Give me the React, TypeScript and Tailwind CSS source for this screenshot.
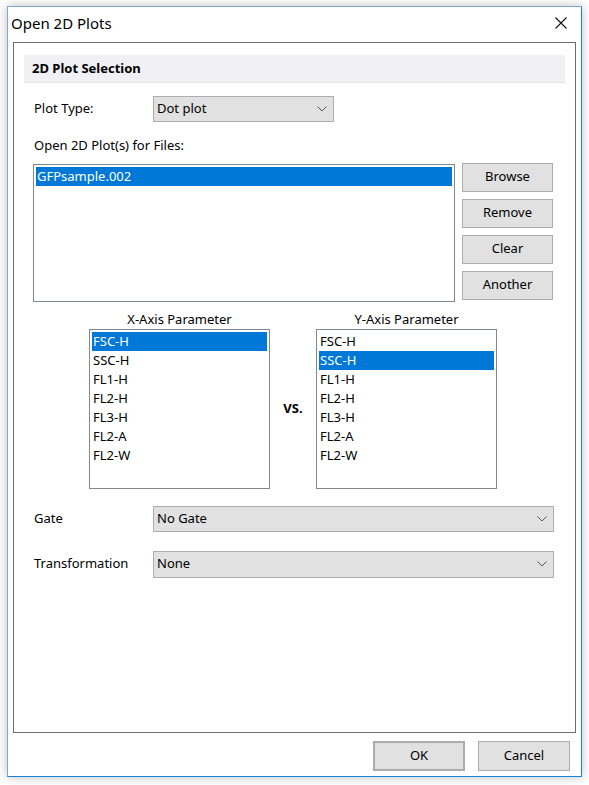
import React from 'react';

const font = { fontFamily: '"Noto Sans", "Open Sans", sans-serif' };

function Chevron() {
  return (
    <svg width="10" height="6" viewBox="0 0 10 6" className="shrink-0">
      <path d="M0.5 0.5 L5 5 L9.5 0.5" fill="none" stroke="#555" strokeWidth="1" />
    </svg>
  );
}

function Dropdown({ value, className }: { value: string; className: string }) {
  return (
    <div className={`flex items-center justify-between border border-[#adadad] bg-[#e1e1e1] pl-[3px] pr-[6px] text-[13px] text-black ${className}`}>
      <span>{value}</span>
      <Chevron />
    </div>
  );
}

function Button({ label, className = '' }: { label: string; className?: string }) {
  return (
    <div className={`flex items-center justify-center border border-[#adadad] bg-[#e1e1e1] text-[13px] text-black ${className}`}>
      {label}
    </div>
  );
}

const params = ['FSC-H', 'SSC-H', 'FL1-H', 'FL2-H', 'FL3-H', 'FL2-A', 'FL2-W'];

function ParamList({ title, selected }: { title: string; selected: number }) {
  return (
    <div className="flex w-[181px] flex-col items-center">
      <div className="h-[20px] text-[13px] leading-[20px] text-black">{title}</div>
      <div className="h-[160px] w-full border border-[#828790] bg-white p-[2px]">
        {params.map((p, i) => (
          <div
            key={p}
            className={`h-[19px] pl-[1px] text-[13px] leading-[19px] ${i === selected ? 'bg-[#0078d7] text-white' : 'text-black'}`}
          >
            {p}
          </div>
        ))}
      </div>
    </div>
  );
}

export default function App() {
  return (
    <div className="h-[785px] w-[589px] overflow-hidden bg-white pl-[7px] pt-[6px]" style={font}>
      <div className="flex h-[771px] w-[575px] flex-col border border-[#1883d7] border-l-[#7aa9d6] border-t-[#7aa9d6] bg-white shadow-[0_0_10px_rgba(0,0,0,0.25)]">
        {/* title bar */}
        <div className="flex h-[30px] items-center justify-between pl-[3px] pr-[14px] pt-[2px]">
          <span className="text-[15px] text-black">Open 2D Plots</span>
          <svg width="12" height="12" viewBox="0 0 12 12">
            <path d="M0.5 0.5 L11.5 11.5 M11.5 0.5 L0.5 11.5" stroke="#111" strokeWidth="1.1" />
          </svg>
        </div>

        {/* main panel */}
        <div className="mx-[5px] mt-[5px] flex h-[691px] flex-col border border-[#6d6d6d] px-[10px] pt-[12px]">
          <div className="flex h-[28px] items-center border-b border-[#e4e4ea] bg-[#f0f0f5] pl-[8px] text-[13px] font-bold text-black">
            2D Plot Selection
          </div>

          <div className="mt-[13px] flex items-center">
            <span className="w-[129px] pl-[10px] text-[13px] text-black">Plot Type:</span>
            <Dropdown value="Dot plot" className="h-[26px] w-[181px]" />
          </div>

          <div className="mt-[14px] pl-[10px] text-[13px] text-black">Open 2D Plot(s) for Files:</div>

          <div className="mt-[7px] flex pl-[9px]">
            <div className="mt-[1px] h-[138px] w-[422px] border border-[#828790] bg-white p-[2px]">
              <div className="h-[19px] bg-[#0078d7] pl-[1px] text-[13px] leading-[19px] text-white">GFPsample.002</div>
            </div>
            <div className="ml-[7px] flex flex-col gap-[7px]">
              <Button label="Browse" className="h-[29px] w-[91px]" />
              <Button label="Remove" className="h-[29px] w-[91px]" />
              <Button label="Clear" className="h-[29px] w-[91px]" />
              <Button label="Another" className="h-[29px] w-[91px]" />
            </div>
          </div>

          <div className="mt-[7px] flex pl-[65px]">
            <ParamList title="X-Axis Parameter" selected={0} />
            <div className="flex w-[46px] items-center justify-center pt-[20px] text-[13px] font-bold text-black">VS.</div>
            <ParamList title="Y-Axis Parameter" selected={1} />
          </div>

          <div className="mt-[17px] flex items-center">
            <span className="w-[129px] pl-[10px] text-[13px] text-black">Gate</span>
            <Dropdown value="No Gate" className="h-[26px] w-[401px]" />
          </div>

          <div className="mt-[19px] flex items-center">
            <span className="w-[129px] pl-[10px] text-[13px] text-black">Transformation</span>
            <Dropdown value="None" className="h-[27px] w-[401px]" />
          </div>
        </div>

        {/* footer buttons */}
        <div className="mt-[8px] flex justify-end gap-[13px] pr-[11px]">
          <Button label="OK" className="h-[30px] w-[92px] border-2 border-[#0078d7]" />
          <Button label="Cancel" className="h-[30px] w-[92px]" />
        </div>
      </div>
    </div>
  );
}
